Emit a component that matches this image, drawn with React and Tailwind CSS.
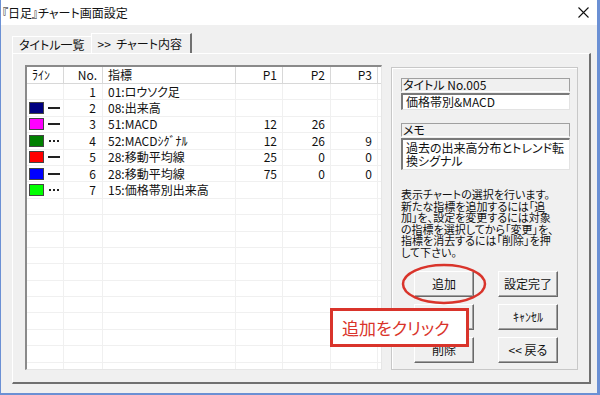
import React from 'react';

const FONT = "font-['Noto_Sans_CJK_JP','Noto_Sans',sans-serif] [font-feature-settings:'palt']";

const rows = [
    { no: 1, name: '01:ロウソク足', color: null, line: null, p: ['', '', ''] },
    { no: 2, name: '08:出来高', color: 'bg-[#000080]', line: 'solid', p: ['', '', ''] },
    { no: 3, name: '51:MACD', color: 'bg-[#ff00ff]', line: 'solid', p: ['12', '26', ''] },
    { no: 4, name: '52:MACDｼｸﾞﾅﾙ', color: 'bg-[#008000]', line: 'dot', p: ['12', '26', '9'] },
    { no: 5, name: '28:移動平均線', color: 'bg-[#ff0000]', line: 'solid', p: ['25', '0', '0'] },
    { no: 6, name: '28:移動平均線', color: 'bg-[#0000ff]', line: 'solid', p: ['75', '0', '0'] },
    { no: 7, name: '15:価格帯別出来高', color: 'bg-[#00ff00]', line: 'dot', p: ['', '', ''] },
];

const empty = Array.from({ length: 12 });

function LineMark({ type }) {
    if (type === 'solid') return <span className="block w-[12px] h-[2px] bg-[#222]" />;
    if (type === 'dot')
        return (
            <span className="flex gap-[2px] pl-[1px]">
                <span className="w-[2px] h-[2px] bg-[#222]" />
                <span className="w-[2px] h-[2px] bg-[#222]" />
                <span className="w-[2px] h-[2px] bg-[#222]" />
            </span>
        );
    return null;
}

function Row({ r }) {
    return (
        <div className="flex h-[16.4px] border-b border-[#f0f0f0] text-[12px] leading-none text-[#111]">
            <div className="w-[37px] flex items-center pl-[2px] gap-[4px] border-r border-[#f0f0f0]">
                {r && r.color && <span className={`w-[15px] h-[12px] border border-[#444] ${r.color}`} />}
                {r && <LineMark type={r.line} />}
            </div>
            <div className="w-[39px] flex items-center justify-end pr-[6px] border-r border-[#f0f0f0]">{r ? r.no : ''}</div>
            <div className="w-[133px] flex items-center pl-[5px] border-r border-[#f0f0f0] whitespace-nowrap">{r ? r.name : ''}</div>
            <div className="w-[47px] flex items-center justify-end pr-[5px] border-r border-[#f0f0f0]">{r ? r.p[0] : ''}</div>
            <div className="w-[48px] flex items-center justify-end pr-[5px] border-r border-[#f0f0f0]">{r ? r.p[1] : ''}</div>
            <div className="w-[47px] flex items-center justify-end pr-[5px] border-r border-[#f0f0f0]">{r ? r.p[2] : ''}</div>
        </div>
    );
}

function Btn({ children }) {
    return (
        <div className="w-[60px] h-[26px] flex items-center justify-center bg-[#f0f0f0] border border-t-white border-l-white border-r-[#696969] border-b-[#696969] shadow-[inset_-1px_-1px_0_#a0a0a0] text-[12px] text-[#111]">
            {children}
        </div>
    );
}

export default function App() {
    return (
        <div className={`w-[600px] h-[395px] flex flex-col bg-[#f0f0f0] border-l border-r-[3px] border-b-2 border-[#6b90d4] overflow-hidden ${FONT}`}>
            {/* title bar */}
            <div className="h-[25px] bg-white flex items-center justify-between shrink-0">
                <span className="text-[12px] text-[#111] pl-[1px] whitespace-nowrap">『日足』チャート画面設定</span>
                <svg width="11" height="11" viewBox="0 0 11 11" className="mr-[8px]">
                    <path d="M0.5 0.5 L10.5 10.5 M10.5 0.5 L0.5 10.5" stroke="#111" strokeWidth="1.1" />
                </svg>
            </div>

            <div className="flex-1 flex flex-col pl-[11px] pr-[6px] pt-[9px] pb-[9px]">
                {/* tabs */}
                <div className="flex h-[19px] items-end text-[12px] text-[#111]">
                    <div className="h-[17px] px-[6px] flex items-center border-t border-l border-white bg-[#f0f0f0]">タイトル一覧</div>
                    <div className="h-[20px] pl-[6px] pr-[8px] flex items-center border-t border-l border-white border-r-2 border-r-[#707070] whitespace-nowrap">&gt;&gt;&nbsp;&nbsp;チャート内容</div>
                </div>

                {/* tab panel */}
                <div className="flex-1 flex border-l border-t border-white border-r-2 border-b-2 border-r-[#707070] border-b-[#707070] pl-[12px] pt-[11px] pr-[11px]">
                    {/* list view */}
                    <div className="w-[357px] h-[305px] bg-white border-t-2 border-l-2 border-t-[#8a8a8a] border-l-[#8a8a8a] border-r border-b border-r-[#e6e6e6] border-b-[#e6e6e6] overflow-hidden">
                        <div className="flex h-[17px] border-b border-[#d8d8d8] text-[12px] leading-none text-[#111]">
                            <div className="w-[37px] flex items-center pl-[5px] border-r border-[#d8d8d8]">ﾗｲﾝ</div>
                            <div className="w-[39px] flex items-center justify-end pr-[5px] border-r border-[#d8d8d8]">No.</div>
                            <div className="w-[133px] flex items-center pl-[5px] border-r border-[#d8d8d8]">指標</div>
                            <div className="w-[47px] flex items-center justify-end pr-[5px] border-r border-[#d8d8d8]">P1</div>
                            <div className="w-[48px] flex items-center justify-end pr-[5px] border-r border-[#d8d8d8]">P2</div>
                            <div className="w-[47px] flex items-center justify-end pr-[5px] border-r border-[#d8d8d8]">P3</div>
                        </div>
                        {rows.map((r) => (
                            <Row key={r.no} r={r} />
                        ))}
                        {empty.map((_, i) => (
                            <Row key={'e' + i} r={null} />
                        ))}
                    </div>

                    {/* group box */}
                    <div className="relative ml-[9px] mt-[2px] w-[187px] h-[303px] border border-[#c8c8c8] shadow-[inset_1px_1px_0_white] pl-[9px] pr-[7px] pt-[10px]">
                        <div className="h-[14px] flex items-center border-t border-l border-r border-[#a0a0a0] border-b border-b-white text-[12px] leading-none text-[#111] pl-[1px] bg-[#f0f0f0]">
                            タイトル No.005
                        </div>
                        <div className="mt-[1px] h-[17px] flex items-center bg-white border-t-2 border-l-2 border-[#7a7a7a] border-r border-b border-r-[#e3e3e3] border-b-[#e3e3e3] pl-[3px] text-[12px] leading-none text-[#111]">
                            価格帯別&amp;MACD
                        </div>
                        <div className="mt-[13px] h-[14px] flex items-center border-t border-l border-r border-[#a0a0a0] border-b border-b-white text-[12px] leading-none text-[#111] pl-[1px]">
                            メモ
                        </div>
                        <div className="mt-[1px] h-[32px] bg-white border-t-2 border-l-2 border-[#7a7a7a] border-r border-b border-r-[#e3e3e3] border-b-[#e3e3e3] pl-[3px] pt-[1px] text-[12px] leading-[13px] text-[#111]">
                            <div className="whitespace-nowrap">過去の出来高分布とトレンド転</div>
                            <div className="whitespace-nowrap">換シグナル</div>
                        </div>
                        <div className="mt-[19px] text-[11px] leading-[11.6px] text-[#111] whitespace-nowrap">
                            <div>表示チャートの選択を行います。</div>
                            <div>新たな指標を追加するには「追</div>
                            <div>加」を、設定を変更するには対象</div>
                            <div>の指標を選択してから「変更」を、</div>
                            <div>指標を消去するには「削除」を押</div>
                            <div>して下さい。</div>
                        </div>

                        <div className="absolute left-[22px] top-[203px] grid grid-cols-[60px_60px] gap-x-[24px] gap-y-[7px]">
                            <Btn>追加</Btn>
                            <Btn>設定完了</Btn>
                            <Btn>変更</Btn>
                            <Btn>ｷｬﾝｾﾙ</Btn>
                            <Btn>削除</Btn>
                            <Btn>&lt;&lt; 戻る</Btn>
                        </div>

                        {/* annotation: ellipse */}
                        <svg className="absolute left-[9px] top-[195px]" width="86" height="42" viewBox="0 0 86 42">
                            <ellipse cx="43" cy="21" rx="41" ry="19" fill="none" stroke="#d9342b" strokeWidth="2.5" />
                        </svg>

                        {/* annotation: callout */}
                        <div className="absolute left-[-62px] top-[240px] w-[139px] h-[39px] bg-white border-[3px] border-[#d9342b] flex items-center pl-[9px] text-[17px] text-[#d9342b] whitespace-nowrap">
                            追加をクリック
                        </div>
                    </div>
                </div>
            </div>
        </div>
    );
}
